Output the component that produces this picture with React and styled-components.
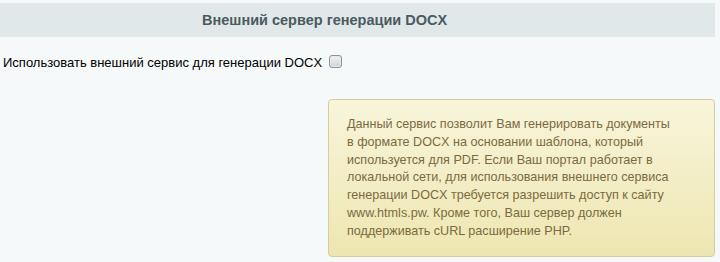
import React from "react";
import styled, { createGlobalStyle } from "styled-components";

const Global = createGlobalStyle`
  html, body { margin: 0; padding: 0; background: #f5f9f9; }
  body { font-family: "Liberation Sans", Arial, sans-serif; }
`;

const Page = styled.div`
  width: 715px;
  padding-top: 3px;
`;

const Heading = styled.div`
  height: 34px;
  background: #e0e8ea;
  display: flex;
  align-items: center;
  padding-left: 202px;
  font-size: 14.5px;
  font-weight: bold;
  color: #4b5a5e;
`;

const Row = styled.div`
  display: grid;
  grid-template-columns: 328px 1fr;
  align-items: center;
  margin-top: ${(p) => p.$gap}px;
`;

const Label = styled.label`
  font-size: 13px;
  color: #000;
  padding-left: 3px;
  padding-top: 3px;
  white-space: nowrap;
`;

const Cell = styled.div`
  display: flex;
  align-items: center;
`;

const Check = styled.span`
  display: inline-block;
  box-sizing: border-box;
  width: 13px;
  height: 13px;
  margin-left: 1px;
  border: 1px solid #8d9294;
  border-radius: 3px;
  background: linear-gradient(#f2f2f2, #cfd3d5);
  box-shadow: inset 0 0 0 1px #e8eaea;
`;

const Note = styled.div`
  box-sizing: border-box;
  width: 387px;
  height: 158px;
  border: 1px solid #d6cc9c;
  border-radius: 4px;
  background: linear-gradient(#f8f5db, #eee6b1);
  padding: 16px 18px;
  font-size: 12.6px;
  line-height: 17.8px;
  color: #7b6a3f;
`;

const Line = styled.div`
  white-space: nowrap;
`;

const lines = [
  "Данный сервис позволит Вам генерировать документы",
  "в формате DOCX на основании шаблона, который",
  "используется для PDF. Если Ваш портал работает в",
  "локальной сети, для использования внешнего сервиса",
  "генерации DOCX требуется разрешить доступ к сайту",
  "www.htmls.pw. Кроме того, Ваш сервер должен",
  "поддерживать cURL расширение PHP.",
];

export default function App() {
  return (
    <>
      <Global />
      <Page>
        <Heading>Внешний сервер генерации DOCX</Heading>
        <Row $gap={15}>
          <Label>Использовать внешний сервис для генерации DOCX</Label>
          <Cell><Check /></Cell>
        </Row>
        <Row $gap={29}>
          <div />
          <Note>
            {lines.map((l) => (
              <Line key={l}>{l}</Line>
            ))}
          </Note>
        </Row>
      </Page>
    </>
  );
}
